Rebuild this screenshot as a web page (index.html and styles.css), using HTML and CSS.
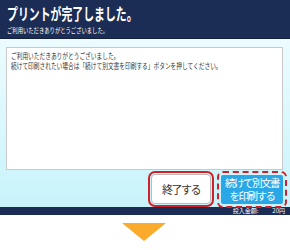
FILE: index.html
```html
<!DOCTYPE html>
<html lang="ja">
<head>
  <meta charset="UTF-8">
  <title>プリント完了</title>
  <link rel="stylesheet" href="styles.css">
</head>
<body>
  <div class="screen">
    <div class="header">
      <h1 class="title"><span>プリントが完了しました。</span></h1>
      <p class="subtitle"><span>ご利用いただきありがとうございました。</span></p>
    </div>
    <div class="main">
      <div class="panel">
        <p class="message"><span>ご利用いただきありがとうございました。</span></p>
        <p class="message"><span>続けて印刷されたい場合は「続けて別文書を印刷する」ボタンを押してください。</span></p>
      </div>
      <div class="actions">
        <button class="btn btn-end">終了する</button>
        <button class="btn btn-next">続けて別文書<br>を印刷する</button>
      </div>
    </div>
    <div class="footer">
      <span class="amount-label">投入金額:</span>
      <span class="amount">20円</span>
    </div>
  </div>
  <div class="arrow-row">
    <div class="arrow"></div>
  </div>
</body>
</html>
```
FILE: styles.css
```css
body {
  margin: 0;
  background: #fff;
  font-family: "Noto Sans CJK JP", "Noto Sans", sans-serif;
}
.screen {
  width: 290px;
}
.header {
  height: 39px;
  background-color: #1b2c55;
  border-bottom: 1px solid #14203f;
  padding: 0 7px;
  box-sizing: border-box;
  overflow: hidden;
}
.title {
  margin: 0;
  padding-top: 3px;
  font-size: 16px;
  line-height: 21px;
  font-weight: bold;
  color: #fff;
  white-space: nowrap;
}
.title span,
.subtitle span,
.message span {
  display: inline-block;
  transform-origin: left center;
}
.title span {
  transform: scaleX(0.68);
}
.subtitle {
  margin: 1px 0 0;
  font-size: 7px;
  line-height: 10px;
  color: #fff;
  white-space: nowrap;
}
.subtitle span {
  transform: scaleX(0.76);
}
.main {
  height: 168px;
  box-sizing: border-box;
  padding: 8px 7px 3px 6px;
  background: linear-gradient(#ecfcff, #c8f3fb);
  display: flex;
  flex-direction: column;
}
.panel {
  height: 123px;
  box-sizing: border-box;
  background: #fff;
  border: 1px solid #c9c9c9;
  padding: 3px 4px;
}
.message {
  margin: 0;
  font-size: 7.5px;
  line-height: 10px;
  color: #333;
  white-space: nowrap;
}
.message span {
  transform: scaleX(0.76);
}
.actions {
  flex: 1;
  display: flex;
  justify-content: flex-end;
  align-items: flex-end;
  gap: 10px;
}
.btn {
  font-family: "Liberation Sans", "Noto Sans CJK JP", sans-serif;
  cursor: pointer;
  padding: 0;
  white-space: nowrap;
}
/* 終了ボタン（赤い実線の囲み） */
.btn-end {
  width: 60px;
  height: 30px;
  background: #fff;
  border: 1px solid #bbb;
  border-radius: 4px;
  font-size: 11px;
  letter-spacing: -1.5px;
  color: #333;
  outline: 2px solid #d0202a;
  outline-offset: 1px;
}
/* 続けて印刷ボタン（赤い破線の囲み） */
.btn-next {
  width: 62px;
  height: 29px;
  background: #2aa7e6;
  border: none;
  border-radius: 2px;
  font-size: 10.5px;
  line-height: 13px;
  letter-spacing: -1.5px;
  color: #fff;
  outline: 2px dashed #d0202a;
  outline-offset: 2px;
  position: relative;
  z-index: 1;
}
.footer {
  height: 8px;
  background-color: #1b2c55;
  display: flex;
  justify-content: flex-end;
  align-items: center;
  padding-right: 5px;
  font-size: 6px;
  line-height: 8px;
  color: #fff;
}
.amount-label {
  margin-right: 14px;
}
.arrow-row {
  width: 290px;
  padding-top: 8px;
  display: flex;
  justify-content: center;
}
.arrow {
  margin-left: -3px;
  width: 0;
  height: 0;
  border-left: 22px solid transparent;
  border-right: 22px solid transparent;
  border-top: 18px solid #fbab2c;
}
```
